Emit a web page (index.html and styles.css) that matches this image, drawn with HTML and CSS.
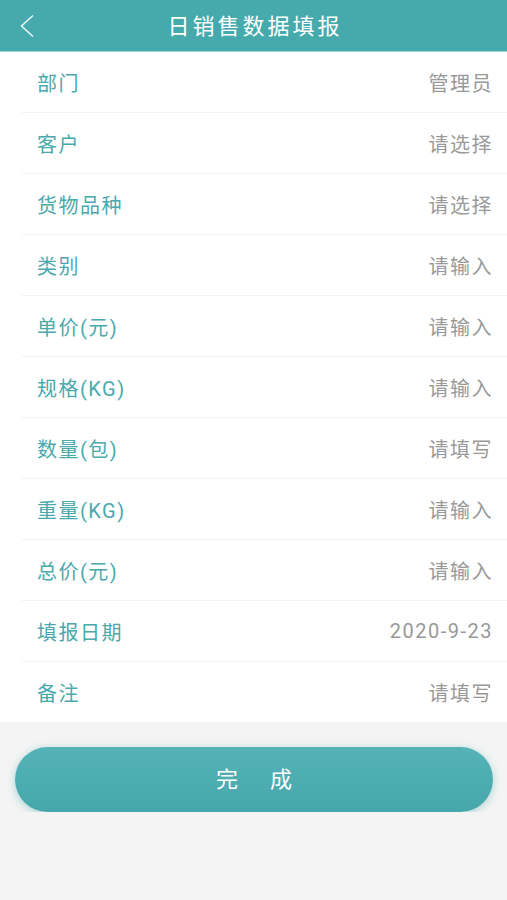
FILE: index.html
```html
<!DOCTYPE html>
<html lang="zh-CN">

<head>
    <meta charset="UTF-8">
    <meta name="viewport" content="width=device-width, initial-scale=1.0">
    <title>日销售数据填报</title>
    <link rel="stylesheet" href="styles.css">
</head>

<body>

    <header class="top-bar">
        <a class="back" href="#">
            <svg width="16" height="24" viewBox="0 0 16 24">
                <path d="M14 1.5 L2.5 12 L14 22.5" fill="none" stroke="#e6f6f6" stroke-width="1.6" />
            </svg>
        </a>
        <h1>日销售数据填报</h1>
    </header>

    <ul class="form-list">
        <li><span class="label">部门</span><span class="value">管理员</span></li>
        <li><span class="label">客户</span><span class="value">请选择</span></li>
        <li><span class="label">货物品种</span><span class="value">请选择</span></li>
        <li><span class="label">类别</span><span class="value">请输入</span></li>
        <li><span class="label">单价(元)</span><span class="value">请输入</span></li>
        <li><span class="label">规格(KG)</span><span class="value">请输入</span></li>
        <li><span class="label">数量(包)</span><span class="value">请填写</span></li>
        <li><span class="label">重量(KG)</span><span class="value">请输入</span></li>
        <li><span class="label">总价(元)</span><span class="value">请输入</span></li>
        <li><span class="label">填报日期</span><span class="value">2020-9-23</span></li>
        <li><span class="label">备注</span><span class="value">请填写</span></li>
    </ul>

    <div class="actions">
        <button type="button">完　成</button>
    </div>

</body>

</html>
```

FILE: styles.css
```css
/* General Styles */
body {
    margin: 0;
    background: #f4f4f4;
    font-family: Roboto, "Noto Sans CJK SC", sans-serif;
}

/* Header */
.top-bar {
    position: relative;
    height: 48px;
    padding-bottom: 3px;
    background: #46aaad;
    border-bottom: 1px solid #9fd6d7;
    display: flex;
    align-items: center;
    justify-content: center;
}

.top-bar h1 {
    margin: 0;
    padding-left: 3px;
    font-size: 22px;
    font-weight: 400;
    color: #ffffff;
    letter-spacing: 3px;
}

.back {
    position: absolute;
    left: 19px;
    top: 14px;
    display: block;
    line-height: 0;
}

/* Form List */
.form-list {
    list-style: none;
    margin: 0;
    padding: 0 0 0 22px;
    background: #ffffff;
}

.form-list li {
    height: 60px;
    display: flex;
    align-items: center;
    justify-content: space-between;
    padding: 0 14px 0 15px;
    border-bottom: 1px solid #f2f2f2;
}

.form-list li:last-child {
    border-bottom: none;
}

.label {
    font-size: 20px;
    letter-spacing: 1.5px;
    color: #4aa9ac;
}

.value {
    font-size: 20px;
    letter-spacing: 1.5px;
    color: #999999;
}

/* Button */
.actions {
    padding: 25px 14px 0 15px;
}

.actions button {
    width: 100%;
    height: 65px;
    padding: 0 0 5px 5px;
    border: none;
    border-radius: 33px;
    background: linear-gradient(#55b3b7, #46a7aa);
    box-shadow: 0 2px 8px rgba(70, 170, 173, 0.45);
    color: #ffffff;
    font-family: "Noto Sans CJK SC", sans-serif;
    font-size: 22px;
    letter-spacing: 5px;
    cursor: pointer;
}
```
